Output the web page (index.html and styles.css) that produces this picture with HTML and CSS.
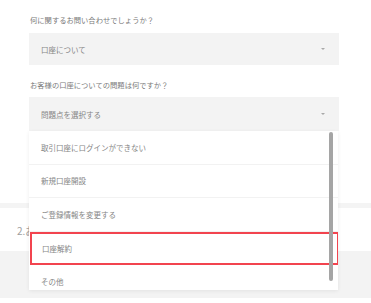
FILE: index.html
```html
<!DOCTYPE html>
<html lang="ja">
<head>
<meta charset="UTF-8">
<meta name="viewport" content="width=device-width, initial-scale=1.0">
<title>お問い合わせ</title>
<link rel="stylesheet" href="styles.css">
</head>
<body>

<div class="form">

<p class="label">何に関するお問い合わせでしょうか？</p>
<div class="select first">
<span>口座について</span>
<i class="arrow"></i>
</div>

<p class="label">お客様の口座についての問題は何ですか？</p>
<div class="select-wrap">
<div class="select open">
<span>問題点を選択する</span>
<i class="arrow"></i>
</div>

<div class="menu">
<div class="option">取引口座にログインができない</div>
<div class="option">新規口座開設</div>
<div class="option">ご登録情報を変更する</div>
<div class="option marked">口座解約</div>
<div class="option">その他</div>
<div class="scrollbar"></div>
</div>
</div>

</div>

<div class="divider"></div>

<div class="step">2.お問い合わせ内容</div>

<div class="footer"></div>

</body>
</html>
```

FILE: styles.css
```css
body{
    margin:0;
    font-family:"Noto Sans CJK JP", "Noto Sans", sans-serif;
    background:#fff;
    width:371px;
    height:303px;
    overflow:hidden;
}

.form{
    padding:14px 32px 72px 29px;
}

.label{
    margin:0 0 7px 1px;
    font-size:7.3px;
    line-height:12px;
    color:#7a7a7a;
}

.select{
    display:flex;
    align-items:center;
    justify-content:space-between;
    background:#f3f3f3;
    height:32px;
    padding:0 14px 0 12px;
    font-size:7.5px;
    color:#858585;
}

.select.first{
    margin-bottom:14px;
}

.select.open{
    height:34px;
    margin-top:-1px;
}

.arrow{
    width:0;
    height:0;
    border-left:2.5px solid transparent;
    border-right:2.5px solid transparent;
    border-top:2.5px solid #a8a8a8;
}

.select-wrap{
    position:relative;
}

.menu{
    position:absolute;
    top:100%;
    left:0;
    right:1px;
    height:159px;
    background:#fff;
    overflow:hidden;
    box-shadow:0 1px 4px rgba(0,0,0,0.07);
    z-index:2;
}

.option{
    box-sizing:border-box;
    height:33.5px;
    display:flex;
    align-items:center;
    padding-left:12px;
    font-size:7.5px;
    color:#858585;
    border-bottom:1px solid #f2f2f2;
}

.option.marked{
    border:2px solid #f2444f;
    margin:0 -1px 0 1px;
    padding-left:10px;
}

.scrollbar{
    position:absolute;
    top:1px;
    left:300px;
    width:4px;
    height:149px;
    border-radius:2px;
    background:#a5a5a5;
}

.divider{
    height:5px;
    background:#f4f4f4;
}

.step{
    height:43px;
    padding-left:17px;
    display:flex;
    align-items:center;
    padding-top:2px;
    box-sizing:border-box;
    font-size:10px;
    color:#a0a0a0;
}

.footer{
    height:47px;
    background:#f3f3f3;
}
```
